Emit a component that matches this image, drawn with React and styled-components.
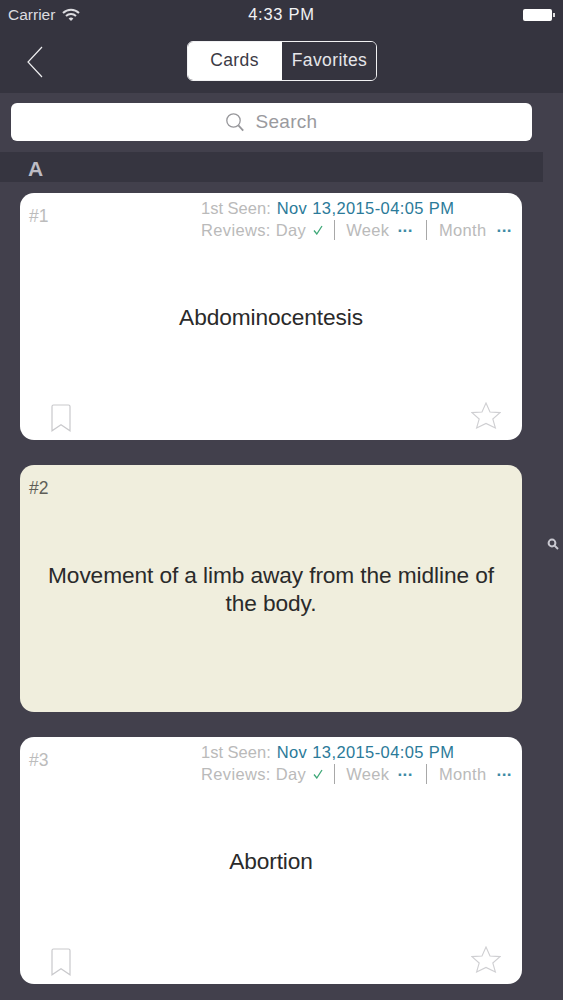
import React from "react";
import styled, { createGlobalStyle } from "styled-components";

const GlobalStyle = createGlobalStyle`
  html, body {
    margin: 0;
    padding: 0;
    background: #42404c;
    font-family: "Liberation Sans", Arial, sans-serif;
  }
`;

const Page = styled.div`
  position: relative;
  width: 563px;
  height: 1000px;
  overflow: hidden;
  background: #42404c;
`;

const Header = styled.header`
  height: 93px;
  background: #35343f;
  display: flex;
  flex-direction: column;
`;

const StatusBar = styled.div`
  height: 29px;
  display: grid;
  grid-template-columns: 1fr auto 1fr;
  align-items: center;
  padding: 0 8px;
  font-size: 15.5px;
`;

const Carrier = styled.div`
  display: flex;
  align-items: center;
  gap: 7px;
  color: #dcdce0;
`;

const Clock = styled.div`
  font-size: 16.5px;
  letter-spacing: 0.75px;
  color: #f2f2f4;
`;

const Battery = styled.div`
  justify-self: end;
  display: flex;
  align-items: center;
  gap: 1px;
`;

const BatteryBody = styled.div`
  width: 29px;
  height: 12px;
  background: #fff;
  border-radius: 2px;
`;

const BatteryTip = styled.div`
  width: 2px;
  height: 4px;
  background: #ddd;
`;

const NavRow = styled.div`
  flex: 1;
  display: flex;
  align-items: flex-start;
  justify-content: center;
  padding-top: 12px;
`;

const Back = styled.svg`
  position: absolute;
  left: 26px;
  top: 46px;
`;

const Segmented = styled.div`
  display: flex;
  width: 190px;
  height: 40px;
  box-sizing: border-box;
  border: 1.5px solid #f1f1f3;
  border-radius: 6px;
  overflow: hidden;
`;

const Segment = styled.div`
  flex: 1;
  text-align: center;
  line-height: 37px;
  font-size: 17.5px;
  text-indent: ${(p) => (p.$active ? 0 : 2)}px;
  background: ${(p) => (p.$active ? "#fff" : "#35343f")};
  color: ${(p) => (p.$active ? "#3b3a45" : "#e6e6ea")};
  letter-spacing: 0.4px;
`;

const SearchWrap = styled.div`
  padding: 10px 31px 11px 11px;
`;

const SearchBox = styled.div`
  height: 38px;
  background: #fff;
  border-radius: 6px;
  display: flex;
  align-items: center;
  justify-content: center;
  gap: 10px;
  color: #9a9a9e;
  font-size: 19px;
  letter-spacing: 0.3px;
`;

const SectionHeader = styled.div`
  width: 543px;
  height: 30px;
  background: #363540;
  color: #bdbcc4;
  font-size: 21px;
  font-weight: 700;
  line-height: 33px;
  padding-left: 28px;
  box-sizing: border-box;
`;

const CardList = styled.div`
  display: flex;
  flex-direction: column;
  gap: 25px;
  padding: 11px 41px 0 20px;
`;

const Card = styled.article`
  position: relative;
  height: 247px;
  border-radius: 14px;
  background: ${(p) => (p.$answer ? "#f0eedd" : "#fff")};
  display: flex;
  align-items: center;
  justify-content: center;
`;

const CardNumber = styled.div`
  position: absolute;
  left: 9px;
  top: 13px;
  font-size: 17.5px;
  color: ${(p) => (p.$answer ? "#5f5e58" : "#bcbcbc")};
`;

const Meta = styled.div`
  position: absolute;
  left: 181px;
  top: 4px;
  font-size: 16.5px;
  letter-spacing: 0.35px;
  color: #bababa;
`;

const MetaRow = styled.div`
  display: flex;
  align-items: center;
  height: 22px;
`;

const SeenLabel = styled.span`
  letter-spacing: 0;
`;

const SeenDate = styled.span`
  color: #2b7a99;
  margin-left: 6px;
  letter-spacing: 0.4px;
`;

const ReviewLabel = styled.span`
  margin-right: 5px;
`;

const Tick = styled.svg`
  margin-left: 7px;
`;

const Dots = styled.span`
  color: #3d8aa5;
  font-weight: 700;
  font-size: 17px;
  letter-spacing: -0.5px;
  margin-left: ${(p) => p.$left}px;
  line-height: 1;
`;

const Divider = styled.span`
  width: 1px;
  height: 20px;
  background: #a8a8a8;
  margin: 0 ${(p) => p.$right}px 0 ${(p) => p.$left}px;
`;

const CardText = styled.div`
  font-size: 22.7px;
  line-height: 28px;
  color: #2a2a2a;
  text-align: center;
  padding: 0 20px;
  letter-spacing: -0.1px;
`;

const Corner = styled.svg`
  position: absolute;
  bottom: ${(p) => p.$bottom}px;
  ${(p) => (p.$right ? `right: ${p.$right}px;` : `left: ${p.$left}px;`)}
`;

const IndexSearch = styled.svg`
  position: absolute;
  right: 4px;
  top: 538px;
`;

const WifiIcon = () => (
  <svg width="18" height="14" viewBox="0 0 18 14" fill="none" stroke="#dcdce0" strokeWidth="2">
    <path d="M1 5 C5.5 0.6 12.5 0.6 17 5" />
    <path d="M4 8 C6.8 5.4 11.2 5.4 14 8" />
    <path d="M9 13 L6.6 10.4 C8 9.2 10 9.2 11.4 10.4 Z" fill="#dcdce0" stroke="none" />
  </svg>
);

const SearchGlyph = () => (
  <svg width="20" height="20" viewBox="0 0 20 20" fill="none" stroke="#97979b" strokeWidth="1.3">
    <circle cx="8.5" cy="8.5" r="6.7" />
    <path d="M13.4 13.4 L18.2 18.6" strokeWidth="1.8" />
  </svg>
);

const Bookmark = () => (
  <Corner $left={31} $bottom={8} width="20" height="28" viewBox="0 0 20 28" fill="none" stroke="#c9c9cc" strokeWidth="1.2">
    <path d="M1 26.8 V2.5 Q1 1 2.5 1 H17.5 Q19 1 19 2.5 V26.8 L10 20.8 Z" />
  </Corner>
);

const Star = () => (
  <Corner $right={21} $bottom={11} width="30" height="27" viewBox="0 0 30 27" fill="none" stroke="#cfcfd2" strokeWidth="1.1">
    <path d="M15 1 L19 10 L29 10.6 L21.8 17 L24.4 26 L15 21.4 L5.6 26 L8.2 17 L1 10.6 L11 10 Z" />
  </Corner>
);

const FrontCard = ({ number, term }) => (
  <Card>
    <CardNumber>{number}</CardNumber>
    <Meta>
      <MetaRow>
        <SeenLabel>1st Seen:</SeenLabel>
        <SeenDate>Nov 13,2015-04:05 PM</SeenDate>
      </MetaRow>
      <MetaRow>
        <ReviewLabel>Reviews:</ReviewLabel>
        Day
        <Tick width="10" height="10" viewBox="0 0 10 10" fill="none" stroke="#3fa878" strokeWidth="1.3">
          <path d="M1 5.5 L3.8 9 L9 1" />
        </Tick>
        <Divider $left={11} $right={11} />
        Week
        <Dots $left={8}>···</Dots>
        <Divider $left={13} $right={12} />
        Month
        <Dots $left={10}>···</Dots>
      </MetaRow>
    </Meta>
    <CardText>{term}</CardText>
    <Bookmark />
    <Star />
  </Card>
);

const BackCard = ({ number, text }) => (
  <Card $answer>
    <CardNumber $answer>{number}</CardNumber>
    <CardText>{text}</CardText>
  </Card>
);

export default function App() {
  return (
    <Page>
      <GlobalStyle />
      <Header>
        <StatusBar>
          <Carrier>
            Carrier
            <WifiIcon />
          </Carrier>
          <Clock>4:33 PM</Clock>
          <Battery>
            <BatteryBody />
            <BatteryTip />
          </Battery>
        </StatusBar>
        <NavRow>
          <Back width="18" height="32" viewBox="0 0 18 32" fill="none" stroke="#eeeef0" strokeWidth="1.2">
            <path d="M16 1 L2 16 L16 31" />
          </Back>
          <Segmented>
            <Segment $active>Cards</Segment>
            <Segment>Favorites</Segment>
          </Segmented>
        </NavRow>
      </Header>
      <SearchWrap>
        <SearchBox>
          <SearchGlyph />
          Search
        </SearchBox>
      </SearchWrap>
      <SectionHeader>A</SectionHeader>
      <CardList>
        <FrontCard number="#1" term="Abdominocentesis" />
        <BackCard number="#2" text="Movement of a limb away from the midline of the body." />
        <FrontCard number="#3" term="Abortion" />
      </CardList>
      <IndexSearch width="12" height="12" viewBox="0 0 12 12" fill="none" stroke="#c9c8d0" strokeWidth="2">
        <circle cx="5" cy="5" r="3.4" />
        <path d="M7.6 7.6 L11 11" />
      </IndexSearch>
    </Page>
  );
}
